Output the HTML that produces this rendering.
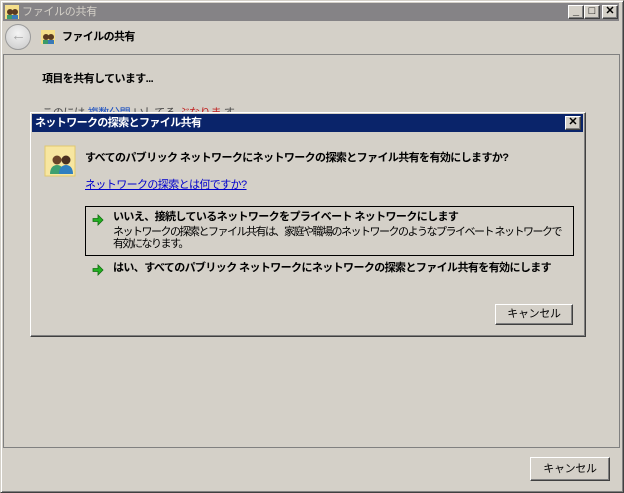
<!DOCTYPE html>
<html><head><meta charset="utf-8"><style>
*{margin:0;padding:0;box-sizing:border-box}
body{width:624px;height:493px;background:#d4d0c8;position:relative;overflow:hidden;font-family:"Liberation Sans","Noto Sans CJK JP",sans-serif;font-size:11px;letter-spacing:-0.3px;color:#000}
.a{position:absolute}
.t{white-space:nowrap;line-height:13px}
.b{font-weight:bold;letter-spacing:-0.6px}
.btn{position:absolute;background:#d4d0c8;border:1px solid;border-color:#fff #404040 #404040 #fff;box-shadow:inset -1px -1px 0 #808080;text-align:center;font-size:11px;line-height:18px}
.cap{position:absolute;width:16px;height:14px;background:#d4d0c8;border:1px solid;border-color:#fff #404040 #404040 #fff;box-shadow:inset -1px -1px 0 #808080;font-size:11px;line-height:11px;text-align:center;font-weight:bold;letter-spacing:0}
.arrow{position:absolute;width:12px;height:12px}
</style></head><body>
<div class="a" style="left:0;top:0;width:624px;height:493px;border:1px solid;border-color:#d4d0c8 #404040 #404040 #d4d0c8;box-shadow:inset 1px 1px 0 #fff,inset -1px -1px 0 #808080"></div>
<div class="a" style="left:3px;top:3px;width:616px;height:18px;background:#858386"></div>
<svg class="a" style="left:4px;top:4px" width="16" height="16"><rect x="1" y="1" width="14" height="14" fill="#f5df8a"/><circle cx="6" cy="8" r="3" fill="#5a3a20"/><circle cx="11" cy="8" r="3" fill="#5a3a20"/><rect x="3" y="11" width="5" height="4" fill="#3b9a6a"/><rect x="8" y="11" width="6" height="4" fill="#3a7ab8"/></svg>
<div class="a t" style="left:22px;top:6px;color:#d4d0c8">ファイルの共有</div>
<div class="cap" style="left:568px;top:5px">_</div>
<div class="cap" style="left:584px;top:5px">□</div>
<div class="cap" style="left:602px;top:5px">✕</div>
<div class="a" style="left:5px;top:24px;width:26px;height:26px;border-radius:50%;background:radial-gradient(circle at 50% 35%,#f4f4f4,#c8c8c8);border:1px solid #9a9a9a"></div>
<div class="a t" style="left:11px;top:29px;color:#a8a8a8;font-size:15px;font-weight:bold">←</div>
<svg class="a" style="left:40px;top:29px" width="16" height="16"><rect x="1" y="1" width="14" height="14" fill="#f5df8a"/><circle cx="6" cy="8" r="3" fill="#5a3a20"/><circle cx="11" cy="8" r="3" fill="#5a3a20"/><rect x="3" y="11" width="5" height="4" fill="#3b9a6a"/><rect x="8" y="11" width="6" height="4" fill="#3a7ab8"/></svg>
<div class="a t b" style="left:62px;top:31px">ファイルの共有</div>
<div class="a" style="left:3px;top:54px;width:617px;height:394px;border:1px solid #808080"></div>
<div class="a t b" style="left:42px;top:73px">項目を共有しています...</div>
<div class="a" style="left:42px;top:107px;height:5px;overflow:hidden"><div class="t" style="color:#444">このには <span style="color:#1a4fc0">複数公開</span> いしてる <span style="color:#c02020">ぶなりま</span> す</div></div>
<div class="btn" style="left:530px;top:457px;width:80px;height:24px;line-height:22px">キャンセル</div>
<div class="a" style="left:30px;top:112px;width:556px;height:225px;background:#d4d0c8;border:1px solid;border-color:#fff #404040 #404040 #fff;box-shadow:inset -1px -1px 0 #808080"></div>
<div class="a" style="left:32px;top:114px;width:551px;height:18px;background:#0a246a"></div>
<div class="a t b" style="left:35px;top:117px;color:#fff">ネットワークの探索とファイル共有</div>
<div class="cap" style="left:565px;top:116px;width:16px;height:14px">✕</div>
<svg class="a" style="left:44px;top:145px" width="32" height="32"><rect x="1" y="1" width="30" height="30" fill="#f7e6a0" stroke="#e0c870"/><circle cx="13" cy="15" r="4.5" fill="#6a4428"/><circle cx="22" cy="15" r="4.5" fill="#4a3020"/><path d="M6 29c0-6 3-9 7-9s7 3 7 9z" fill="#3ea070"/><path d="M15 29c0-6 3-9 7-9s7 3 7 9z" fill="#2f7fc0"/></svg>
<div class="a t b" style="left:85px;top:152px">すべてのパブリック ネットワークにネットワークの探索とファイル共有を有効にしますか?</div>
<div class="a t" style="left:85px;top:179px;color:#0000cc;text-decoration:underline;letter-spacing:-0.6px">ネットワークの探索とは何ですか?</div>
<div class="a" style="left:85px;top:206px;width:489px;height:50px;border:1px solid #000"></div>
<svg class="arrow" style="left:92px;top:214px" viewBox="0 0 12 12"><path d="M1 4.5h5V1l5 5-5 5V7.5H1z" fill="#22b022" stroke="#107010" stroke-width=".8"/></svg>
<div class="a t b" style="left:113px;top:211px">いいえ、接続しているネットワークをプライベート ネットワークにします</div>
<div class="a t" style="left:113px;top:226px;line-height:12px;letter-spacing:-1.5px">ネットワークの探索とファイル共有は、家庭や職場のネットワークのようなプライベート ネットワークで<br>有効になります。</div>
<svg class="arrow" style="left:92px;top:264px" viewBox="0 0 12 12"><path d="M1 4.5h5V1l5 5-5 5V7.5H1z" fill="#22b022" stroke="#107010" stroke-width=".8"/></svg>
<div class="a t b" style="left:113px;top:262px">はい、すべてのパブリック ネットワークにネットワークの探索とファイル共有を有効にします</div>
<div class="btn" style="left:495px;top:304px;width:78px;height:21px">キャンセル</div>
</body></html>
